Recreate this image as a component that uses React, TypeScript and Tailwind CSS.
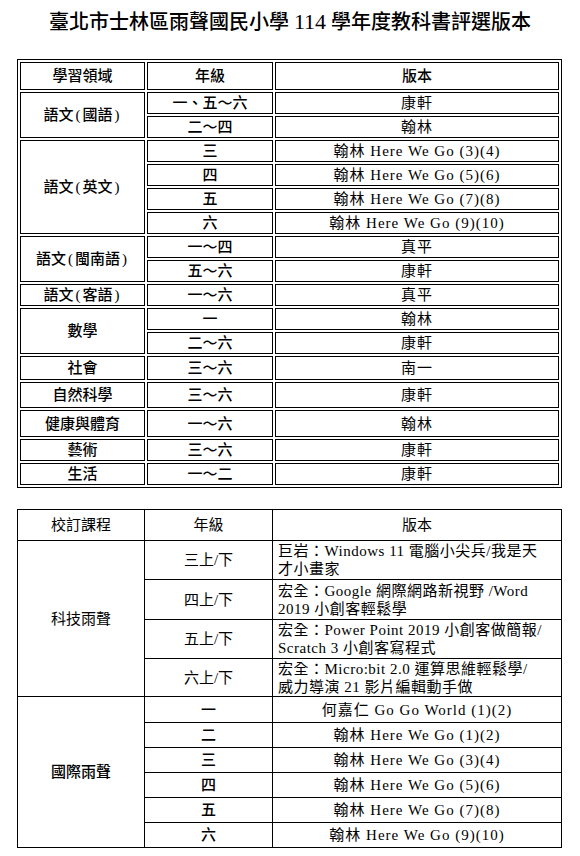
import React from 'react';

type Row = { grade: string; book: string; h: string };
type Group = { subject: string; rows: Row[] };

const groups1: Group[] = [
  {
    subject: '語文(國語)',
    rows: [
      { grade: '一、五～六', book: '康軒', h: 'h-[22px]' },
      { grade: '二～四', book: '翰林', h: 'h-[22px]' },
    ],
  },
  {
    subject: '語文(英文)',
    rows: [
      { grade: '三', book: '翰林 Here We Go (3)(4)', h: 'h-[22px]' },
      { grade: '四', book: '翰林 Here We Go (5)(6)', h: 'h-[22px]' },
      { grade: '五', book: '翰林 Here We Go (7)(8)', h: 'h-[22px]' },
      { grade: '六', book: '翰林 Here We Go (9)(10)', h: 'h-[22px]' },
    ],
  },
  {
    subject: '語文(閩南語)',
    rows: [
      { grade: '一～四', book: '真平', h: 'h-[21px]' },
      { grade: '五～六', book: '康軒', h: 'h-[22px]' },
    ],
  },
  { subject: '語文(客語)', rows: [{ grade: '一～六', book: '真平', h: 'h-[22px]' }] },
  {
    subject: '數學',
    rows: [
      { grade: '一', book: '翰林', h: 'h-[22px]' },
      { grade: '二～六', book: '康軒', h: 'h-[22px]' },
    ],
  },
  { subject: '社會', rows: [{ grade: '三～六', book: '南一', h: 'h-[24px]' }] },
  { subject: '自然科學', rows: [{ grade: '三～六', book: '康軒', h: 'h-[26px]' }] },
  { subject: '健康與體育', rows: [{ grade: '一～六', book: '翰林', h: 'h-[27px]' }] },
  { subject: '藝術', rows: [{ grade: '三～六', book: '康軒', h: 'h-[22px]' }] },
  { subject: '生活', rows: [{ grade: '一～二', book: '康軒', h: 'h-[22px]' }] },
];

const tech: { grade: string; lines: string[]; h: string }[] = [
  { grade: '三上/下', lines: ['巨岩：Windows 11 電腦小尖兵/我是天', '才小畫家'], h: 'h-[39px]' },
  { grade: '四上/下', lines: ['宏全：Google 網際網路新視野 /Word', '2019 小創客輕鬆學'], h: 'h-[40px]' },
  { grade: '五上/下', lines: ['宏全：Power Point 2019 小創客做簡報/', 'Scratch 3 小創客寫程式'], h: 'h-[39px]' },
  { grade: '六上/下', lines: ['宏全：Micro:bit 2.0 運算思維輕鬆學/', '威力導演 21 影片編輯動手做'], h: 'h-[38px]' },
];

const intl: { grade: string; book: string; h: string }[] = [
  { grade: '一', book: '何嘉仁 Go Go World (1)(2)', h: 'h-[26px]' },
  { grade: '二', book: '翰林 Here We Go (1)(2)', h: 'h-[25px]' },
  { grade: '三', book: '翰林 Here We Go (3)(4)', h: 'h-[25px]' },
  { grade: '四', book: '翰林 Here We Go (5)(6)', h: 'h-[25px]' },
  { grade: '五', book: '翰林 Here We Go (7)(8)', h: 'h-[25px]' },
  { grade: '六', book: '翰林 Here We Go (9)(10)', h: 'h-[25px]' },
];

// half-width parens in the subject names get a little room, like the Kai font
function Subject({ text }: { text: string }) {
  return (
    <>
      {text.split(/([()])/).map((part, i) =>
        part === '(' || part === ')' ? (
          <span key={i} className="inline-block w-[9px] text-center font-normal">
            {part}
          </span>
        ) : (
          <span key={i}>{part}</span>
        )
      )}
    </>
  );
}

const cell = 'border border-black p-0 text-center align-middle';

export default function App() {
  return (
    <div className="w-[580px] min-h-[856px] bg-white text-black font-['Liberation_Serif','Noto_Sans_CJK_TC',serif]">
      <h1 className="pt-[10px] text-center text-[20px] leading-[24px] font-medium">
        臺北市士林區雨聲國民小學<span className="px-[5px] text-[22px]">114</span>學年度教科書評選版本
      </h1>

      <table className="ml-[17px] mt-[25px] w-[545px] table-fixed border-separate border-spacing-[2px] border border-black text-[15px] leading-[20px]">
        <colgroup>
          <col className="w-[125px]" />
          <col className="w-[126px]" />
          <col />
        </colgroup>
        <thead>
          <tr className="h-[28px]">
            <th className={`${cell} font-medium`}>學習領域</th>
            <th className={`${cell} font-medium`}>年級</th>
            <th className={`${cell} font-medium`}>版本</th>
          </tr>
        </thead>
        <tbody>
          {groups1.map((g) =>
            g.rows.map((r, i) => (
              <tr key={g.subject + i} className={r.h}>
                {i === 0 && (
                  <td rowSpan={g.rows.length} className={`${cell} font-medium`}>
                    <Subject text={g.subject} />
                  </td>
                )}
                <td className={`${cell} font-medium`}>{r.grade}</td>
                <td className={`${cell} tracking-[1px]`}>{r.book}</td>
              </tr>
            ))
          )}
        </tbody>
      </table>

      <table className="ml-[17px] mt-[21px] w-[545px] table-fixed border-collapse border border-black text-[15px] leading-[18px]">
        <colgroup>
          <col className="w-[127px]" />
          <col className="w-[128px]" />
          <col />
        </colgroup>
        <thead>
          <tr className="h-[31px]">
            <th className={`${cell} font-normal`}>校訂課程</th>
            <th className={`${cell} font-normal`}>年級</th>
            <th className={`${cell} font-normal`}>版本</th>
          </tr>
        </thead>
        <tbody>
          {tech.map((r, i) => (
            <tr key={r.grade} className={r.h}>
              {i === 0 && (
                <td rowSpan={tech.length} className={`${cell} font-normal`}>
                  科技雨聲
                </td>
              )}
              <td className={`${cell} font-normal`}>{r.grade}</td>
              <td className="border border-black py-0 pl-[5px] pr-0 text-left align-middle whitespace-nowrap tracking-[0.5px]">
                {r.lines[0]}
                <br />
                {r.lines[1]}
              </td>
            </tr>
          ))}
          {intl.map((r, i) => (
            <tr key={'i' + r.grade} className={r.h}>
              {i === 0 && (
                <td rowSpan={intl.length} className={`${cell} font-medium`}>
                  國際雨聲
                </td>
              )}
              <td className={`${cell} font-medium`}>{r.grade}</td>
              <td className={`${cell} tracking-[1px]`}>{r.book}</td>
            </tr>
          ))}
        </tbody>
      </table>
    </div>
  );
}
